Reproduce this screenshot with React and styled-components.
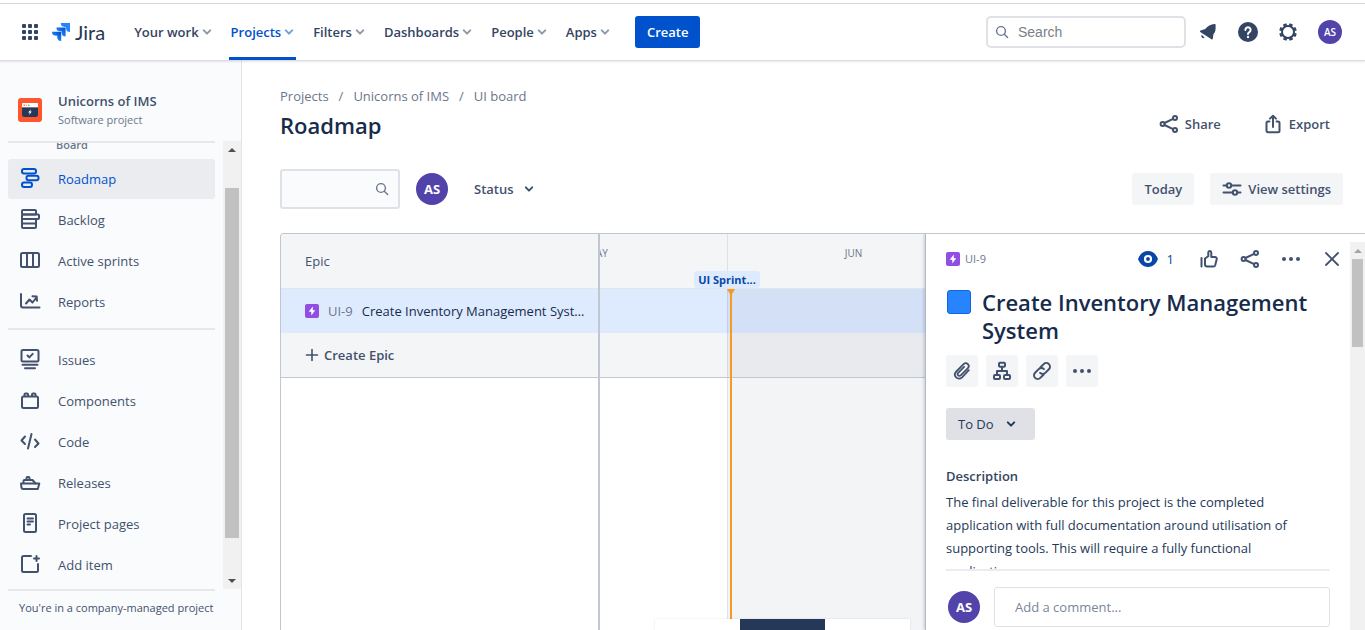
import React from "react";
import styled, { createGlobalStyle } from "styled-components";

const Global = createGlobalStyle`
  *, *::before, *::after { box-sizing: border-box; }
  body {
    margin: 0;
    background: #fff;
    color: #172b4d;
    font-family: "Open Sans", "Noto Sans", sans-serif;
    font-size: 13px;
    line-height: 20px;
  }
  button, input, select { font: inherit; color: inherit; }
  button { border: 0; background: none; padding: 0; cursor: pointer; }
  a { color: inherit; text-decoration: none; }
  h1, h2, h3, p, ul, ol { margin: 0; padding: 0; font-weight: inherit; font-size: inherit; }
  ul, ol { list-style: none; }
`;

/* ---------- icons ---------- */

const Svg = styled.svg`
  display: block;
  flex: none;
  fill: none;
  stroke: currentColor;
  stroke-width: ${(p) => p.$stroke || 2};
  stroke-linecap: round;
  stroke-linejoin: round;
`;

const Icon = ({ size = 24, stroke, children, box = 24 }) => (
  <Svg width={size} height={size} viewBox={`0 0 ${box} ${box}`} $stroke={stroke} aria-hidden="true">
    {children}
  </Svg>
);

const Chevron = ({ size = 10, stroke = 2 }) => (
  <Icon size={size} box={10} stroke={stroke}>
    <path d="M1.8 3.4 5 6.6l3.2-3.2" />
  </Icon>
);

const AppSwitcherIcon = () => (
  <Icon size={18} box={18}>
    <g fill="currentColor" stroke="none">
      {[1, 7, 13].map((y) => [1, 7, 13].map((x) => <rect key={`${x}-${y}`} x={x} y={y} width="4" height="4" rx="1" />))}
    </g>
  </Icon>
);

const JiraMark = () => (
  <Svg width="18" height="18" viewBox="0 0 18 18" aria-hidden="true">
    <defs>
      <linearGradient id="jiraA" x1="1" y1="0" x2="0.3" y2="0.8">
        <stop offset="0.1" stopColor="#0052cc" />
        <stop offset="0.9" stopColor="#2684ff" />
      </linearGradient>
    </defs>
    <g stroke="none">
      <path fill="#2684ff" d="M8.8 0H18v9.1a4 4 0 0 1-4-4V3.9h-1.4A3.9 3.9 0 0 1 8.8 0Z" />
      <path fill="url(#jiraA)" d="M4.4 4.4h9.2v9.2a4 4 0 0 1-4-4V8.3H8.2a3.9 3.9 0 0 1-3.8-3.9Z" />
      <path fill="url(#jiraA)" d="M0 8.8h9.2V18a4 4 0 0 1-4-4v-1.3H3.8A3.9 3.9 0 0 1 0 8.8Z" />
    </g>
  </Svg>
);

const SearchIcon = ({ size = 14 }) => (
  <Icon size={size} box={14} stroke={1.4}>
    <circle cx="6" cy="6" r="4.4" />
    <path d="m9.3 9.3 3.3 3.3" />
  </Icon>
);

const BellIcon = () => (
  <Icon size={20} box={20}>
    <g fill="currentColor" stroke="none">
      <path d="M16.6 2c.7 0 1 .4 1 1v3.3c0 2.5-.7 4.300-2.200 5.900l-.6 4.500c-.1.800-.8 1-1.300.5L2.200 9.900c-.5-.5-.3-1.200.4-1.400l4.700-1.500C9.500 4.200 12.800 2.100 16.600 2Z" />
      <path d="M3.700 12.700 6.700 15.700a2.150 2.150 0 0 1-3-3Z" />
    </g>
  </Icon>
);

const HelpIcon = () => (
  <Icon size={20} box={20}>
    <circle cx="10" cy="10" r="10" fill="currentColor" stroke="none" />
    <path d="M7.400 7.900a2.600 2.600 0 1 1 4 2.200c-.9.600-1.400 1-1.400 2" stroke="#fff" />
    <circle cx="10" cy="15" r="1.200" fill="#fff" stroke="none" />
  </Icon>
);

const GearIcon = () => (
  <Icon size={20} box={20}>
    <circle cx="10" cy="10" r="6" strokeWidth="2" />
    <g strokeWidth="3.600" strokeLinecap="butt">
      {[22, 67, 112, 157, 202, 247, 292, 337].map((a) => (
        <path key={a} d="M10 1.200v2.600" transform={`rotate(${a} 10 10)`} />
      ))}
    </g>
  </Icon>
);

const ShareIcon = () => (
  <Icon size={20} box={20}>
    <circle cx="3.600" cy="10" r="2" />
    <circle cx="16" cy="4" r="2" />
    <circle cx="16" cy="16" r="2" />
    <path d="m5.500 9 8.600-4.200M5.500 11l8.600 4.200" />
  </Icon>
);

const ExportIcon = () => (
  <Icon size={20} box={20}>
    <path d="M6.500 7.500H5a1.500 1.500 0 0 0-1.500 1.500v8A1.500 1.500 0 0 0 5 18.200h10a1.500 1.500 0 0 0 1.500-1.500V9A1.500 1.500 0 0 0 15 7.500h-1.500M10 13V2M7 4.600 10 1.700l3 2.900" />
  </Icon>
);

const SlidersIcon = () => (
  <Icon size={20} box={20}>
    <path d="M1.500 6.500h3M9.500 6.500h9M1.500 13.500h9M15.500 13.500h3" />
    <circle cx="7" cy="6.500" r="2.200" />
    <circle cx="13" cy="13.500" r="2.200" />
  </Icon>
);

const PlusIcon = () => (
  <Icon size={14} box={14} stroke={1.6}>
    <path d="M7 1.500v11M1.500 7h11" />
  </Icon>
);

const MoreIcon = () => (
  <Icon size={20} box={20}>
    <g fill="currentColor" stroke="none">
      <circle cx="3" cy="10" r="2" />
      <circle cx="10" cy="10" r="2" />
      <circle cx="17" cy="10" r="2" />
    </g>
  </Icon>
);

const CloseIcon = () => (
  <Icon size={20} box={20} stroke={1.8}>
    <path d="m4 4 12 12M16 4 4 16" />
  </Icon>
);

const EyeIcon = () => (
  <Icon size={20} box={20}>
    <path fill="currentColor" stroke="none" d="M10 2c4.500 0 8 2.800 10 8-2 5.200-5.500 8-10 8S2 15.200 0 10C2 4.800 5.500 2 10 2Z" />
    <circle cx="10" cy="10" r="3" fill="currentColor" stroke="#fff" strokeWidth="2.200" />
  </Icon>
);

const ThumbIcon = () => (
  <Icon size={20} box={20}>
    <path d="M2.500 9v8.500M6 9.500l3.300-2.300V3.500c0-2 3-2 3 .500v4h3.700a1.800 1.800 0 0 1 1.700 2.300l-1.500 5.900a1.800 1.800 0 0 1-1.700 1.300H8.200A2.200 2.200 0 0 1 6 15.300Z" />
  </Icon>
);

const ClipIcon = () => (
  <Icon size={20} box={20} stroke={1.8}>
    <path d="m16.800 9.200-6.700 7.100c-4.100 4.100-9.900-1.700-5.800-5.800l7.300-7.300c3-2.900 7 1.200 4.100 4.100l-7 7c-1.700 1.700-4.200-.8-2.500-2.500l5.900-5.900" />
  </Icon>
);

const TreeIcon = () => (
  <Icon size={20} box={20}>
    <rect x="7" y="1.800" width="6" height="4" rx="1" />
    <rect x="2" y="14" width="6" height="4" rx="1" />
    <rect x="12" y="14" width="6" height="4" rx="1" />
    <path d="M10 6v4M5 13.500V10h10v3.500" />
  </Icon>
);

const LinkIcon = () => (
  <Icon size={20} box={20}>
    <path d="m8.500 6.300 3.200-3.200a3.600 3.600 0 0 1 5.200 5.200l-3.600 3.600a3.600 3.600 0 0 1-5.200 0" />
    <path d="m11.500 13.700-3.200 3.200a3.600 3.600 0 0 1-5.200-5.200l3.600-3.600a3.600 3.600 0 0 1 5.200 0" />
  </Icon>
);

const EpicIcon = () => (
  <Svg width="14" height="14" viewBox="0 0 14 14" role="img" aria-label="Epic">
    <g stroke="none">
      <rect width="14" height="14" rx="2" fill="#904ee2" />
      <path fill="#fff" d="M7.800 2.600v3.600h2.500L6.300 11.400V7.800H3.700Z" />
    </g>
  </Svg>
);

const ProjectAvatar = () => (
  <Svg width="24" height="24" viewBox="0 0 24 24" aria-hidden="true">
    <g stroke="none">
      <rect width="24" height="24" rx="3" fill="#ff5630" />
      <path fill="#fff" d="M5 5h14a1 1 0 0 1 1 1v3.500H4V6a1 1 0 0 1 1-1Z" />
      <path fill="#253858" d="M4 9.500h16v7a2.500 2.500 0 0 1-2.500 2.500h-11A2.500 2.500 0 0 1 4 16.500Z" />
      <circle cx="6.200" cy="7.300" r=".8" fill="#ff5630" />
      <circle cx="8.500" cy="7.300" r=".8" fill="#ffab00" />
      <circle cx="10.800" cy="7.300" r=".8" fill="#36b37e" />
      <path fill="#fff" d="m12.800 11.200-2.600 3.300h1.500l-.5 2.400 2.600-3.300h-1.500Z" />
    </g>
  </Svg>
);

const navIcons = {
  roadmap: (
    <>
      <rect x="4" y="3" width="14" height="4.500" rx="2" />
      <rect x="8.500" y="9.750" width="12" height="4.500" rx="2" />
      <rect x="4" y="16.500" width="10" height="4.500" rx="2" />
    </>
  ),
  backlog: (
    <>
      <rect x="4" y="3" width="14" height="4.500" rx="1" />
      <rect x="4" y="7.500" width="17" height="4.500" rx="1" />
      <path d="M4 12h14v8a1 1 0 0 1-1 1H5a1 1 0 0 1-1-1ZM4.500 16.400h13" />
    </>
  ),
  board: (
    <>
      <rect x="3" y="5" width="18" height="14" rx="1.500" />
      <path d="M9 5v14M15 5v14" />
    </>
  ),
  reports: <path d="M3 5v11.500a2 2 0 0 0 2 2h16.500M8 14.500l3.500-4 3 3 4-5M14.500 7.300l4.200.2.300 4.200" />,
  issues: (
    <>
      <rect x="3.500" y="3" width="17" height="11.500" rx="1.500" />
      <path d="m9.500 8.500 1.800 1.900 3.400-3.500M4.500 17.800h15M7 21.200h10" />
    </>
  ),
  components: (
    <>
      <rect x="4" y="8.500" width="16" height="11.500" rx="1.500" />
      <path d="M6.500 8V6.500a1 1 0 0 1 1-1h1.500a1 1 0 0 1 1 1V8M14 8V6.500a1 1 0 0 1 1-1h1.500a1 1 0 0 1 1 1V8" />
    </>
  ),
  code: <path d="m7 7.500-3.500 4 3.500 3.500M13.500 5l-3.500 14.500M17 10.500l3.500 4-3.500 3.500" />,
  releases: (
    <>
      <path d="M3 13.500h18.300l-1.500 5.500H5a1.500 1.500 0 0 1-1.500-1.200Z" />
      <path d="M5.500 13V11a1 1 0 0 1 1-1h8l3 3.500M8.500 9.500V8a1 1 0 0 1 1-1h1a1 1 0 0 1 1 1v1.500" />
    </>
  ),
  pages: (
    <>
      <rect x="6" y="3" width="12" height="18" rx="1.500" />
      <path d="M9.500 7.500h5.500M9.500 10.500h5.500M9.500 13.500h2.500" />
    </>
  ),
  add: <path d="M13 4H5.500A1.500 1.500 0 0 0 4 5.500v13A1.500 1.500 0 0 0 5.500 20h13a1.500 1.500 0 0 0 1.500-1.500V12M18.500 4v5M16 6.500h5" />,
};

/* ---------- shared parts ---------- */

const Avatar = styled.span`
  display: flex;
  align-items: center;
  justify-content: center;
  flex: none;
  width: ${(p) => (p.$small ? 24 : 32)}px;
  height: ${(p) => (p.$small ? 24 : 32)}px;
  border-radius: 50%;
  background: #5243aa;
  color: #fff;
  font-size: ${(p) => (p.$small ? 10 : 13)}px;
  font-weight: ${(p) => (p.$small ? 600 : 700)};
`;

const Rail = styled.div`
  display: flex;
  flex-direction: column;
  flex: none;
  width: ${(p) => p.$width}px;
  background: #f1f1f1;
  padding: 0 2px;
`;

const RailArrow = styled.span`
  height: 17px;
  display: flex;
  align-items: center;
  justify-content: center;
  color: ${(p) => (p.$muted ? "#a3a3a3" : "#505050")};
  &::before {
    content: "";
    border: 4px solid transparent;
    border-top-width: ${(p) => (p.$down ? 4 : 0)}px;
    border-bottom-width: ${(p) => (p.$down ? 0 : 4)}px;
    border-${(p) => (p.$down ? "top" : "bottom")}-color: currentColor;
  }
`;

const RailThumb = styled.span`
  background: #c1c1c1;
  flex: ${(p) => p.$flex};
`;

const RailSpace = styled.span`
  flex: ${(p) => p.$flex};
`;

/* ---------- page frame ---------- */

const Page = styled.div`
  display: flex;
  flex-direction: column;
  height: 100vh;
  padding-top: 3px;
  overflow: hidden;
`;

const TopBar = styled.header`
  display: flex;
  align-items: center;
  flex: none;
  height: 58px;
  padding: 0 23px 0 21px;
  border-top: 1px solid #d5d7db;
  border-bottom: 1px solid #d9dbe0;
  box-shadow: 0 1px 2px rgba(9, 30, 66, 0.1);
  color: #344563;
  z-index: 1;
`;

const Brand = styled.a`
  display: flex;
  align-items: center;
  gap: 5px;
  margin: 0 27px 0 13px;
  font-family: Lato, "Open Sans", sans-serif;
  font-size: 20px;
  color: #253858;
`;

const MainNav = styled.nav`
  display: flex;
  align-self: stretch;
  gap: 15px;
`;

const NavButton = styled.button`
  display: flex;
  align-items: center;
  gap: 3px;
  padding: 3px 2px 0;
  border-bottom: 3px solid ${(p) => (p.$current ? "#0052cc" : "transparent")};
  color: ${(p) => (p.$current ? "#0052cc" : "#344563")};
  font-weight: 600;
  font-size: 13px;
  white-space: nowrap;
  svg { opacity: 0.55; }
`;

const CreateButton = styled.button`
  height: 32px;
  padding: 0 12px;
  margin-left: 23px;
  border-radius: 3px;
  background: #0052cc;
  color: #fff;
  font-weight: 600;
`;

const GlobalSearch = styled.label`
  display: flex;
  align-items: center;
  gap: 9px;
  width: 200px;
  height: 32px;
  margin-left: auto;
  padding: 0 7px;
  border: 2px solid #dfe1e6;
  border-radius: 5px;
  color: #6b778c;
  input {
    flex: 1;
    min-width: 0;
    border: 0;
    padding: 0;
    outline: 0;
    background: none;
    font-family: "Liberation Sans", Arial, sans-serif;
    font-size: 14px;
  }
  input::placeholder { color: #7a7f87; opacity: 1; }
`;

const TopActions = styled.div`
  display: flex;
  align-items: center;
  gap: 20px;
  margin-left: 12px;
`;

const IconButton = styled.button`
  display: flex;
  align-items: center;
  color: inherit;
`;

const Body = styled.div`
  display: flex;
  flex: 1;
  min-height: 0;
`;

/* ---------- sidebar ---------- */

const Sidebar = styled.aside`
  display: flex;
  flex-direction: column;
  flex: none;
  width: 242px;
  background: #fafbfc;
  border-right: 1px solid #e2e4e9;
  color: #42526e;
`;

const ProjectHead = styled.div`
  display: flex;
  align-items: center;
  gap: 16px;
  padding: 30px 18px 12px;
`;

const ProjectName = styled.h2`
  font-weight: 600;
  font-size: 13px;
  line-height: 20px;
  color: #42526e;
`;

const ProjectKind = styled.p`
  font-size: 11px;
  line-height: 18px;
  color: #6b778c;
`;

const SideScroll = styled.div`
  display: flex;
  flex: 1;
  min-height: 0;
  justify-content: space-between;
`;

const SideNav = styled.nav`
  width: 207px;
  margin-left: 8px;
  border-top: 2px solid #e6e8ec;
  overflow: hidden;
`;

const BoardLabel = styled.div`
  display: flex;
  align-items: flex-end;
  height: 9px;
  margin-bottom: 7px;
  padding-left: 48px;
  overflow: hidden;
  font-size: 11px;
  font-weight: 600;
  line-height: 14px;
  color: #6b778c;
`;

const SideList = styled.ul`
  display: flex;
  flex-direction: column;
  gap: 1px;
  & + & {
    margin-top: 6px;
    padding-top: 10px;
    border-top: 2px solid #e6e8ec;
  }
`;

const SideLink = styled.a`
  display: flex;
  align-items: center;
  gap: 16px;
  height: 40px;
  padding: 0 10px;
  border-radius: 3px;
  background: ${(p) => (p.$current ? "#ebecf0" : "transparent")};
  color: ${(p) => (p.$current ? "#0052cc" : "#42526e")};
  svg { margin-bottom: 2px; }
`;

const SideFoot = styled.p`
  flex: none;
  height: 41px;
  margin-left: 8px;
  margin-right: 26px;
  padding: 7px 0 0 11px;
  border-top: 2px solid #e6e8ec;
  font-size: 11px;
  white-space: nowrap;
`;

/* ---------- main column ---------- */

const Main = styled.main`
  display: flex;
  flex-direction: column;
  flex: 1;
  min-width: 0;
  padding: 25px 0 0 38px;
`;

const PageHead = styled.div`
  display: flex;
  align-items: flex-end;
  justify-content: space-between;
  padding-right: 22px;
`;

const Crumbs = styled.ol`
  display: flex;
  margin-bottom: 5px;
  color: #6b778c;
  li + li::before {
    content: "/";
    margin: 0 10px;
  }
`;

const PageTitle = styled.h1`
  margin-bottom: 1px;
  font-size: 22px;
  line-height: 28px;
  font-weight: 600;
  color: #172b4d;
`;

const Actions = styled.div`
  display: flex;
  align-items: center;
  gap: ${(p) => p.$gap}px;
`;

const TextButton = styled.button`
  display: flex;
  align-items: center;
  gap: 6px;
  height: 32px;
  padding: 0 ${(p) => p.$pad || 12}px;
  border-radius: 3px;
  background: ${(p) => (p.$filled ? "#f4f5f7" : "transparent")};
  color: #42526e;
  font-weight: 600;
`;

const Toolbar = styled.div`
  display: flex;
  align-items: center;
  gap: 16px;
  margin-top: 29px;
  padding-right: 22px;
`;

const FilterSearch = styled.label`
  display: flex;
  align-items: center;
  width: 120px;
  height: 40px;
  padding: 0 9px;
  border: 2px solid #dfe1e6;
  border-radius: 3px;
  background: #fafbfc;
  color: #6b778c;
  input {
    flex: 1;
    min-width: 0;
    border: 0;
    outline: 0;
    background: none;
  }
`;

const StatusButton = styled(TextButton)`
  gap: 10px;
  padding: 0 10px;
`;

const Spacer = styled.div`
  flex: 1;
`;

/* ---------- roadmap ---------- */

const Board = styled.section`
  display: flex;
  flex: 1;
  min-height: 0;
  margin-top: 24px;
  border-top: 1px solid #c1c7d0;
  border-left: 1px solid #c1c7d0;
  border-top-left-radius: 4px;
  overflow: hidden;
`;

const EpicColumn = styled.div`
  flex: none;
  width: 319px;
  border-right: 2px solid #c1c7d0;
`;

const EpicHeading = styled.div`
  display: flex;
  align-items: center;
  height: 55px;
  padding-left: 24px;
  border-bottom: 1px solid #e1e6ee;
  background: #f4f5f7;
  color: #42526e;
`;

const EpicRow = styled.a`
  display: flex;
  align-items: center;
  gap: 9px;
  height: 44px;
  padding: 0 8px 0 24px;
  background: #deebff;
  white-space: nowrap;
  span { color: #6b778c; }
  strong {
    font-weight: 400;
    overflow: hidden;
    text-overflow: ellipsis;
  }
`;

const CreateEpic = styled.button`
  display: flex;
  align-items: center;
  gap: 5px;
  width: 100%;
  height: 45px;
  padding-left: 24px;
  border-bottom: 1px solid #c1c7d0;
  background: #f4f5f7;
  color: #42526e;
  font-weight: 600;
`;

const Timeline = styled.div`
  position: relative;
  display: flex;
  flex-direction: column;
  flex: 1;
  min-width: 0;
  overflow: hidden;
`;

const Months = styled.div`
  display: flex;
  flex: none;
  height: 55px;
  border-bottom: 1px solid #e1e6ee;
  background: #f4f5f7;
`;

const Month = styled.div`
  flex: none;
  width: 256px;
  margin-left: ${(p) => (p.$scrolled ? -128 : 0)}px;
  padding: 9px 4px 0 0;
  border-right: 1px solid #dfe1e6;
  text-align: center;
  font-size: 10px;
  color: #6b778c;
`;

const Track = styled.div`
  display: flex;
  flex: ${(p) => p.$flex || "none"};
  height: ${(p) => p.$height || "auto"};
  background: ${(p) => p.$bg};
  border-bottom: ${(p) => (p.$line ? "1px solid #c1c7d0" : "0")};
  &::before {
    content: "";
    width: 128px;
    border-right: 1px solid rgba(9, 30, 66, 0.13);
  }
  &::after {
    content: "";
    flex: 1;
    background: rgba(9, 30, 66, 0.047);
  }
`;

const SprintChip = styled.span`
  position: absolute;
  top: 37px;
  left: 94px;
  width: 66px;
  height: 17px;
  border-radius: 3px;
  background: #deebff;
  color: #0747a6;
  font-size: 11px;
  font-weight: 700;
  line-height: 17px;
  text-align: center;
  white-space: nowrap;
`;

const TodayMarker = styled.i`
  position: absolute;
  top: 55px;
  bottom: 0;
  left: 130px;
  width: 2px;
  background: #f79b20;
  &::before {
    content: "";
    position: absolute;
    top: 0;
    left: -3px;
    border: 4px solid transparent;
    border-top: 7px solid #f79b20;
    border-bottom: 0;
  }
`;

const ZoomBar = styled.div`
  position: absolute;
  right: 15px;
  bottom: 0;
  display: flex;
  width: 255px;
  height: 11px;
  background: #fff;
  box-shadow: 0 0 2px rgba(9, 30, 66, 0.12);
`;

const ZoomOption = styled.button`
  flex: 1;
  background: ${(p) => (p.$on ? "#253858" : "#fff")};
`;

/* ---------- issue panel ---------- */

const Panel = styled.aside`
  display: flex;
  flex: none;
  width: 440px;
  border-left: 1px solid #b3b8c2;
  background: #fff;
  box-shadow: -1px 0 3px rgba(9, 30, 66, 0.2);
  z-index: 1;
`;

const PanelBody = styled.div`
  display: flex;
  flex-direction: column;
  flex: 1;
  min-width: 0;
  padding: 9px 20px 3px 20px;
`;

const PanelTop = styled.div`
  display: flex;
  align-items: center;
  flex: none;
  height: 32px;
  margin-right: -12px;
  color: #42526e;
`;

const IssueKey = styled.a`
  display: flex;
  align-items: center;
  gap: 5px;
  margin-right: auto;
  font-size: 11px;
  color: #6b778c;
`;

const Watch = styled.button`
  display: flex;
  align-items: center;
  gap: 9px;
  margin-right: 4px;
  color: #0747a6;
`;

const TitleRow = styled.div`
  display: flex;
  gap: 11px;
  flex: none;
  margin-top: 13px;
`;

const ColourSwatch = styled.button`
  flex: none;
  width: 24px;
  height: 24px;
  margin: 2px 0 0 1px;
  border: 1px solid #0c66e4;
  border-radius: 3px;
  background: #2684ff;
`;

const IssueTitle = styled.h2`
  font-size: 22px;
  line-height: 28px;
  font-weight: 600;
`;

const QuickRow = styled.div`
  display: flex;
  flex: none;
  gap: 8px;
  margin-top: 11px;
`;

const QuickButton = styled.button`
  display: flex;
  align-items: center;
  justify-content: center;
  width: 32px;
  height: 32px;
  border-radius: 3px;
  background: #f4f5f7;
  color: #42526e;
`;

const StatusSelect = styled.label`
  display: grid;
  flex: none;
  align-items: center;
  width: 89px;
  height: 32px;
  margin-top: 21px;
  border-radius: 3px;
  background: #dfe1e6;
  color: #253858;
  select, svg { grid-area: 1 / 1; }
  select {
    height: 32px;
    padding: 0 12px;
    border: 0;
    outline: 0;
    appearance: none;
    background: transparent;
  }
  svg {
    justify-self: end;
    margin-right: 19px;
    pointer-events: none;
  }
`;

const Description = styled.div`
  flex: 1;
  min-height: 0;
  margin-top: 26px;
  padding-right: 20px;
  overflow: hidden;
  h3 {
    margin-bottom: 5px;
    font-weight: 600;
    color: #344563;
  }
  p {
    line-height: 23px;
    color: #253858;
  }
`;

const CommentRow = styled.div`
  display: flex;
  align-items: center;
  flex: none;
  gap: 14px;
  padding: 16px 0 0 2px;
  border-top: 2px solid #ebecf0;
`;

const CommentInput = styled.input`
  flex: 1;
  min-width: 0;
  height: 40px;
  padding: 0 20px;
  border: 1px solid #dfe1e6;
  border-radius: 3px;
  outline: 0;
  &::placeholder { color: #7a869a; opacity: 1; }
`;

const PanelRail = styled.div`
  display: flex;
  padding-top: 8px;
`;

const navItems = ["Your work", "Projects", "Filters", "Dashboards", "People", "Apps"];

const planning = [
  ["Roadmap", "roadmap"],
  ["Backlog", "backlog"],
  ["Active sprints", "board"],
  ["Reports", "reports"],
];

const project = [
  ["Issues", "issues"],
  ["Components", "components"],
  ["Code", "code"],
  ["Releases", "releases"],
  ["Project pages", "pages"],
  ["Add item", "add"],
];

const SideItems = ({ items, current }) => (
  <SideList>
    {items.map(([label, icon]) => (
      <li key={label}>
        <SideLink href="#" $current={label === current}>
          <Icon>{navIcons[icon]}</Icon>
          {label}
        </SideLink>
      </li>
    ))}
  </SideList>
);

export default function App() {
  return (
    <Page>
      <Global />
      <TopBar>
        <IconButton aria-label="Switch apps"><AppSwitcherIcon /></IconButton>
        <Brand href="#"><JiraMark />Jira</Brand>
        <MainNav>
          {navItems.map((label) => (
            <NavButton key={label} $current={label === "Projects"} aria-haspopup="true">
              {label}
              <Chevron />
            </NavButton>
          ))}
        </MainNav>
        <CreateButton>Create</CreateButton>
        <GlobalSearch>
          <SearchIcon />
          <input type="text" placeholder="Search" aria-label="Search" />
        </GlobalSearch>
        <TopActions>
          <IconButton aria-label="Notifications"><BellIcon /></IconButton>
          <IconButton aria-label="Help"><HelpIcon /></IconButton>
          <IconButton aria-label="Settings"><GearIcon /></IconButton>
          <IconButton aria-label="Profile"><Avatar $small>AS</Avatar></IconButton>
        </TopActions>
      </TopBar>

      <Body>
        <Sidebar>
          <ProjectHead>
            <ProjectAvatar />
            <div>
              <ProjectName>Unicorns of IMS</ProjectName>
              <ProjectKind>Software project</ProjectKind>
            </div>
          </ProjectHead>
          <SideScroll>
            <SideNav>
              <BoardLabel>Board</BoardLabel>
              <SideItems items={planning} current="Roadmap" />
              <SideItems items={project} />
            </SideNav>
            <Rail $width={18} aria-hidden="true">
              <RailArrow />
              <RailSpace $flex={30} />
              <RailThumb $flex={349} />
              <RailSpace $flex={34} />
              <RailArrow $down />
            </Rail>
          </SideScroll>
          <SideFoot>You're in a company-managed project</SideFoot>
        </Sidebar>

        <Main>
          <PageHead>
            <div>
              <Crumbs>
                <li><a href="#">Projects</a></li>
                <li><a href="#">Unicorns of IMS</a></li>
                <li><a href="#">UI board</a></li>
              </Crumbs>
              <PageTitle>Roadmap</PageTitle>
            </div>
            <Actions $gap={16}>
              <TextButton $pad={13}><ShareIcon />Share</TextButton>
              <TextButton $pad={13}><ExportIcon />Export</TextButton>
            </Actions>
          </PageHead>

          <Toolbar>
            <FilterSearch>
              <input type="text" aria-label="Search roadmap" />
              <SearchIcon />
            </FilterSearch>
            <Avatar>AS</Avatar>
            <StatusButton aria-haspopup="true">Status<Chevron /></StatusButton>
            <Spacer />
            <TextButton $filled>Today</TextButton>
            <TextButton $filled><SlidersIcon />View settings</TextButton>
          </Toolbar>

          <Board>
            <EpicColumn>
              <EpicHeading>Epic</EpicHeading>
              <EpicRow href="#">
                <EpicIcon />
                <span>UI-9</span>
                <strong>Create Inventory Management System</strong>
              </EpicRow>
              <CreateEpic><PlusIcon />Create Epic</CreateEpic>
            </EpicColumn>

            <Timeline>
              <Months>
                <Month $scrolled>MAY</Month>
                <Month>JUN</Month>
              </Months>
              <Track $height="44px" $bg="#deebff" />
              <Track $height="45px" $bg="#f4f5f7" $line />
              <Track $flex="1" $bg="#fff" />
              <SprintChip>UI Sprint...</SprintChip>
              <TodayMarker />
              <ZoomBar>
                <ZoomOption aria-label="Weeks" />
                <ZoomOption aria-label="Months" $on />
                <ZoomOption aria-label="Quarters" />
              </ZoomBar>
            </Timeline>

            <Panel>
              <PanelBody>
                <PanelTop>
                  <IssueKey href="#"><EpicIcon />UI-9</IssueKey>
                  <Actions $gap={21}>
                    <Watch aria-label="Watchers"><EyeIcon />1</Watch>
                    <IconButton aria-label="Vote"><ThumbIcon /></IconButton>
                    <IconButton aria-label="Share"><ShareIcon /></IconButton>
                    <IconButton aria-label="More"><MoreIcon /></IconButton>
                    <IconButton aria-label="Close"><CloseIcon /></IconButton>
                  </Actions>
                </PanelTop>
                <TitleRow>
                  <ColourSwatch aria-label="Epic colour" />
                  <IssueTitle>Create Inventory Management System</IssueTitle>
                </TitleRow>
                <QuickRow>
                  <QuickButton aria-label="Attach"><ClipIcon /></QuickButton>
                  <QuickButton aria-label="Add child issue"><TreeIcon /></QuickButton>
                  <QuickButton aria-label="Link issue"><LinkIcon /></QuickButton>
                  <QuickButton aria-label="More actions"><MoreIcon /></QuickButton>
                </QuickRow>
                <StatusSelect>
                  <select aria-label="Issue status" defaultValue="To Do">
                    <option>To Do</option>
                  </select>
                  <Chevron />
                </StatusSelect>
                <Description>
                  <h3>Description</h3>
                  <p>
                    The final deliverable for this project is the completed application with full
                    documentation around utilisation of supporting tools. This will require a fully
                    functional application
                  </p>
                </Description>
                <CommentRow>
                  <Avatar>AS</Avatar>
                  <CommentInput type="text" placeholder="Add a comment..." aria-label="Add a comment" />
                </CommentRow>
              </PanelBody>
              <PanelRail aria-hidden="true">
                <Rail $width={15}>
                  <RailArrow $muted />
                  <RailThumb $flex="0 0 88px" />
                </Rail>
              </PanelRail>
            </Panel>
          </Board>
        </Main>
      </Body>
    </Page>
  );
}
